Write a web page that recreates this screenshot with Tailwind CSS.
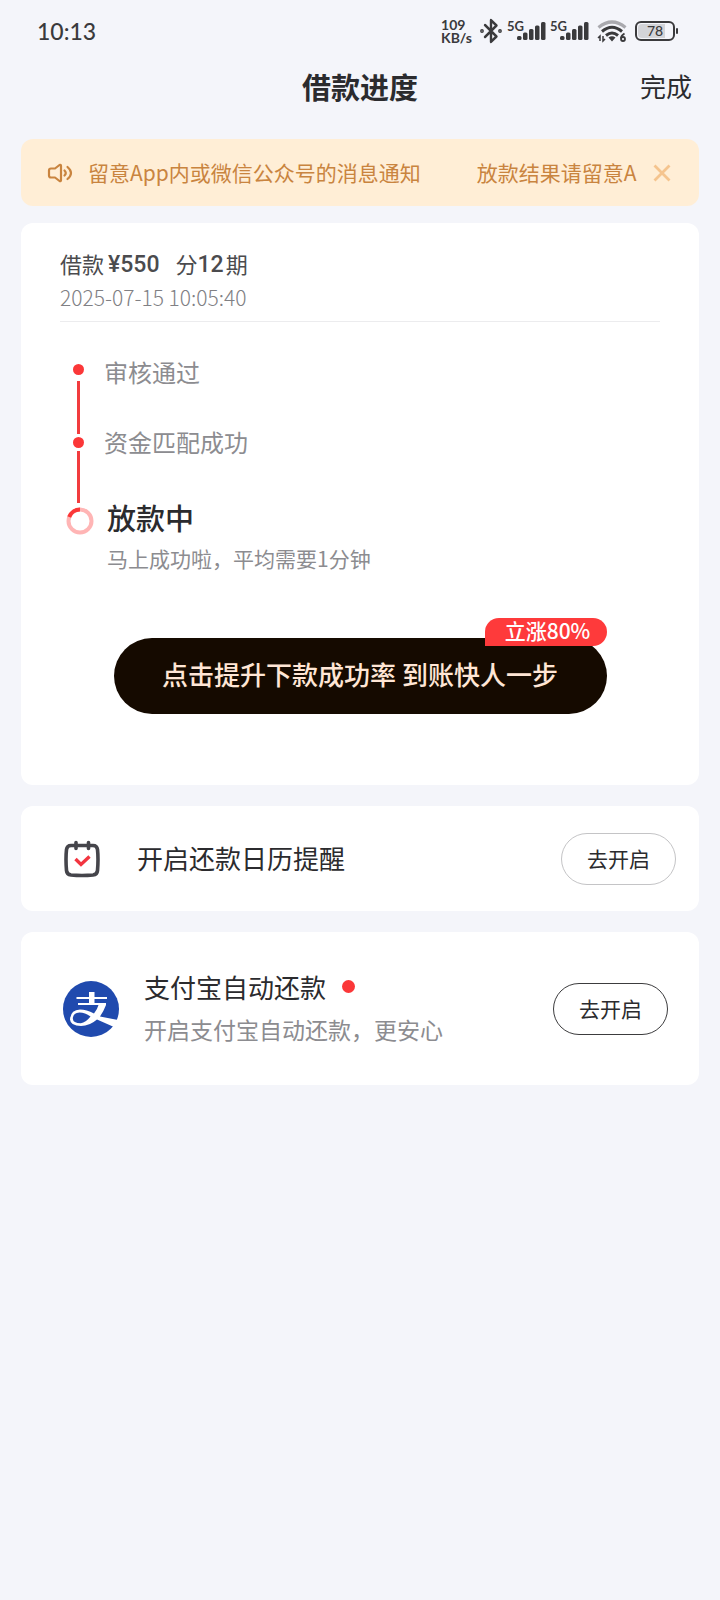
<!DOCTYPE html>
<html lang="zh-CN">
<head>
<meta charset="utf-8">
<meta name="viewport" content="width=device-width, initial-scale=1">
<title>借款进度</title>
<script src="https://cdn.jsdelivr.net/npm/@tailwindcss/browser@4"></script>
</head>
<body class="min-h-screen bg-[#f4f5fa] font-['Noto_Sans_CJK_SC',sans-serif] text-[#2b2b2e]">

<!-- Status bar -->
<div class="flex h-[62px] items-center justify-between pl-[37px] pr-[42px] text-[#3a3a3c]">
  <span class="font-[Lato,sans-serif] text-[23px] leading-8 font-medium">10:13</span>
  <div class="flex items-center gap-1">
    <div class="w-[34px] font-[Lato,sans-serif] text-[14px] leading-[13px] font-bold"><span class="block h-[13px]">109</span><span class="block h-[13px]">KB/s</span></div>
    <svg class="h-[26px] w-6" viewBox="0 0 24 24" preserveAspectRatio="none" fill="none" stroke="currentColor" stroke-width="2.4" stroke-linejoin="round" stroke-linecap="round" aria-label="蓝牙"><path d="M6 6.5 17.5 17 12 22V2l5.500 5L6 17.500"/><circle cx="3" cy="12" r=".7"/><circle cx="21" cy="12" r=".7"/></svg>
    <div class="flex items-start">
      <span class="font-[Lato,sans-serif] text-[13px] leading-3 font-bold">5G</span>
      <svg class="-ml-2 h-[22px] w-[30px]" viewBox="0 0 30 22" fill="currentColor" aria-hidden="true"><rect x="1" y="16" width="4.500" height="4" rx="1.500"/><rect x="7" y="12.500" width="4.500" height="7.500" rx="1.500"/><rect x="13" y="9" width="4.500" height="11" rx="1.500"/><rect x="19" y="5.500" width="4.500" height="14.500" rx="1.500"/><rect x="25" y="2" width="4.500" height="18" rx="1.500"/></svg>
    </div>
    <div class="flex items-start">
      <span class="font-[Lato,sans-serif] text-[13px] leading-3 font-bold">5G</span>
      <svg class="-ml-2 h-[22px] w-[30px]" viewBox="0 0 30 22" fill="currentColor" aria-hidden="true"><rect x="1" y="16" width="4.500" height="4" rx="1.500"/><rect x="7" y="12.500" width="4.500" height="7.500" rx="1.500"/><rect x="13" y="9" width="4.500" height="11" rx="1.500"/><rect x="19" y="5.500" width="4.500" height="14.500" rx="1.500"/><rect x="25" y="2" width="4.500" height="18" rx="1.500"/></svg>
    </div>
    <svg class="ml-1 h-6 w-[30px]" viewBox="0 0 30 24" fill="none" stroke="currentColor" aria-label="Wi-Fi 6">
      <path d="M1.500 8.500Q15-2.500 28.500 8.500" stroke="#a9a9ae" stroke-width="3.200"/>
      <path d="M5 12.500Q15 4 25 12.500M9 16.500Q15 11.500 21 16.500" stroke-width="3"/>
      <path d="m15 22.500-3.500-4q3.500-2.500 7 0Z" fill="currentColor" stroke="none"/>
      <path d="M3 22v-5l-2 2M6 17v5l2-2" stroke-width="1.500"/>
      <path d="M27.500 14.500q-3.500 2-3.500 5" stroke-width="1.800"/><circle cx="26" cy="20" r="2" stroke-width="1.800"/>
    </svg>
    <div class="ml-1 flex items-center gap-px">
      <div class="h-5 w-10 rounded-md border-2 border-[#3a3a3c] p-px">
        <div class="flex h-full items-center rounded-sm bg-linear-to-r from-[#d3d4d8] from-78% to-transparent to-78%"><span class="w-full text-center font-[Lato,sans-serif] text-[14px] leading-3 font-medium">78</span></div>
      </div>
      <span class="h-[6px] w-[2px] rounded bg-[#3a3a3c]"></span>
    </div>
  </div>
</div>

<!-- Title bar -->
<header class="grid h-12 grid-cols-[1fr_auto_1fr] items-center pr-7">
  <h1 class="col-start-2 pl-7 text-[29px] leading-10 font-bold">借款进度</h1>
  <button type="button" class="justify-self-end text-[26px] leading-10">完成</button>
</header>

<main class="mt-[29px] px-[21px]">
  <!-- Notice -->
  <section class="flex h-[67px] items-center rounded-xl bg-[#ffeed6] pr-7 pl-[26px] text-[21px] leading-8 text-[#c9843f]">
    <svg class="h-6 w-[26px] shrink-0" viewBox="0 0 26 24" fill="none" stroke="currentColor" stroke-width="2.200" stroke-linejoin="round" stroke-linecap="round" aria-hidden="true"><path d="M4 7.500h4L12.500 4q1.500-.8 1.500 1v14q0 1.800-1.500 1L8 16.500H4q-2 0-2-2v-5q0-2 2-2ZM17.500 9.500q2.500 2.500 0 5M20.500 6q7 6 0 12"/></svg>
    <div class="ml-[15px] flex min-w-0 flex-1 gap-14 overflow-hidden pb-[2px] whitespace-nowrap"><span>留意App内或微信公众号的消息通知</span><span>放款结果请留意A</span></div>
    <button type="button" aria-label="关闭" class="ml-4 shrink-0 text-[#f5c48e]"><svg class="h-[18px] w-[18px]" viewBox="0 0 18 18" fill="none" stroke="currentColor" stroke-width="2.800"><path d="m1.500 1.500 15 15m0-15-15 15"/></svg></button>
  </section>

  <!-- Loan progress -->
  <section class="mt-[17px] rounded-xl bg-white px-[39px] pt-[22px] pb-[71px]">
    <div class="border-b border-[#ececee] pb-2">
      <p class="flex items-center text-[22px] leading-9 text-[#4b4b4e]"><span>借款</span><span class="ml-1 pt-1 font-[Roboto,sans-serif] text-[23px] leading-8 font-medium">¥550</span><span class="ml-4">分</span><span class="pt-1 font-[Roboto,sans-serif] text-[23px] leading-8 font-medium">12</span><span class="ml-[2px]">期</span></p>
      <p class="text-[21px] leading-8 font-light text-[#808084]">2025-07-15 10:05:40</p>
    </div>
    <ol class="mt-[30px] grid grid-cols-[38px_1fr] pl-1">
      <li class="contents">
        <div class="flex flex-col items-center gap-[6px] pt-[12px] pr-[9px]"><span class="h-[11px] w-[11px] shrink-0 rounded-full bg-[#fb3738]"></span><span class="-mb-3 w-[3px] flex-1 bg-[#f23c3e]"></span></div>
        <p class="h-[70px] pl-[2px] text-[24px] leading-[40px] text-[#8c8c90]">审核通过</p>
      </li>
      <li class="contents">
        <div class="flex flex-col items-center gap-[3px] pt-[15px] pr-[9px]"><span class="h-[11px] w-[11px] shrink-0 rounded-full bg-[#fb3738]"></span><span class="w-[3px] flex-1 bg-[#f23c3e]"></span></div>
        <p class="h-[81px] pl-[2px] text-[24px] leading-[40px] text-[#8c8c90]">资金匹配成功</p>
      </li>
      <li class="contents">
        <div class="pt-1 pl-[2px]"><svg class="h-7 w-7" viewBox="0 0 28 28" fill="none" stroke-width="4" aria-hidden="true"><circle cx="14" cy="14" r="11.500" stroke="#ffb5b5"/><path d="M3.200 10A11.500 11.500 0 0 1 14 2.500" stroke="#fb3738"/></svg></div>
        <div class="-mt-[6px] pl-[5px]">
          <p class="text-[29px] leading-[40px] font-medium">放款中</p>
          <p class="mt-[3px] text-[21px] leading-[36px] text-[#8c8c90]">马上成功啦，平均需要1分钟</p>
        </div>
      </li>
    </ol>
    <div class="relative mx-auto mt-[62px] max-w-[493px]">
      <button type="button" class="h-[76px] w-full rounded-full bg-[#150a00] pb-1 text-[26px] leading-10 font-medium text-[#ffe6d5]">点击提升下款成功率 到账快人一步</button>
      <span class="absolute -top-5 right-0 flex h-7 w-[122px] items-center justify-center rounded-[14px] rounded-bl-none bg-[#fe3a3b] pb-1 pl-1 text-[21px] leading-6 font-medium text-white">立涨80%</span>
    </div>
  </section>

  <!-- Calendar reminder -->
  <section class="mt-[21px] flex h-[105px] items-center rounded-xl bg-white pr-[23px] pl-[43px]">
    <svg class="h-[38px] w-9 shrink-0" viewBox="0 0 36 38" fill="none" stroke="#45454b" stroke-width="3.600" stroke-linecap="round" stroke-linejoin="round" aria-hidden="true"><path d="M7 5.500h22q4 0 4.500 4 1 9 0 21-.3 4-4.500 4.500-11 1-22 0-4.200-.5-4.500-4.500-1-12 0-21 .5-4 4.500-4Z"/><path d="M12 2.500v6M24.500 2.500v6"/><path d="m11.500 19 5.500 5.500 8.500-8" stroke="#f23540" stroke-width="3.400" stroke-linecap="butt" stroke-linejoin="miter"/></svg>
    <h2 class="ml-[37px] flex-1 pb-[2px] text-[26px] leading-10">开启还款日历提醒</h2>
    <button type="button" class="h-[52px] w-[115px] rounded-full border border-[#c4c4c6] pb-[2px] text-[21px] leading-8">去开启</button>
  </section>

  <!-- Alipay automatic repayment -->
  <section class="mt-[21px] flex h-[153px] items-center rounded-xl bg-white pr-[31px] pl-[42px]">
    <svg class="h-14 w-14 shrink-0" viewBox="0 0 56 56" aria-label="支付宝"><circle cx="28" cy="28" r="28" fill="#204aae"/><path d="M26 11h5.500v5H44v2H31.500v4H43v2q-2.500 6.500-6 11.500L55 39l-4 7-17-7.500q-7.500 6.500-16 6.500-10.500 0-11-6.500Q7.500 29 17 28.500q6.500 0 14 4 3.500-4.500 4.500-8.500H15v-2h11v-4H13.500v-2H26Z" fill="#fff"/><path d="M27.500 35.500Q22 31.500 16.500 31.500q-6.500.5-6.700 6 .2 4.700 8 4.700 5-.5 9.700-6.700Z" fill="#204aae"/></svg>
    <div class="ml-[25px] flex-1 pb-1">
      <h2 class="flex items-center gap-4 text-[26px] leading-10">支付宝自动还款<span class="h-[13px] w-[13px] rounded-full bg-[#fb3738]"></span></h2>
      <p class="mt-[4px] text-[23px] leading-9 text-[#8c8c90]">开启支付宝自动还款，更安心</p>
    </div>
    <button type="button" class="h-[52px] w-[115px] rounded-full border border-[#3c3c3e] pb-[2px] text-[21px] leading-8">去开启</button>
  </section>
</main>
</body>
</html>
